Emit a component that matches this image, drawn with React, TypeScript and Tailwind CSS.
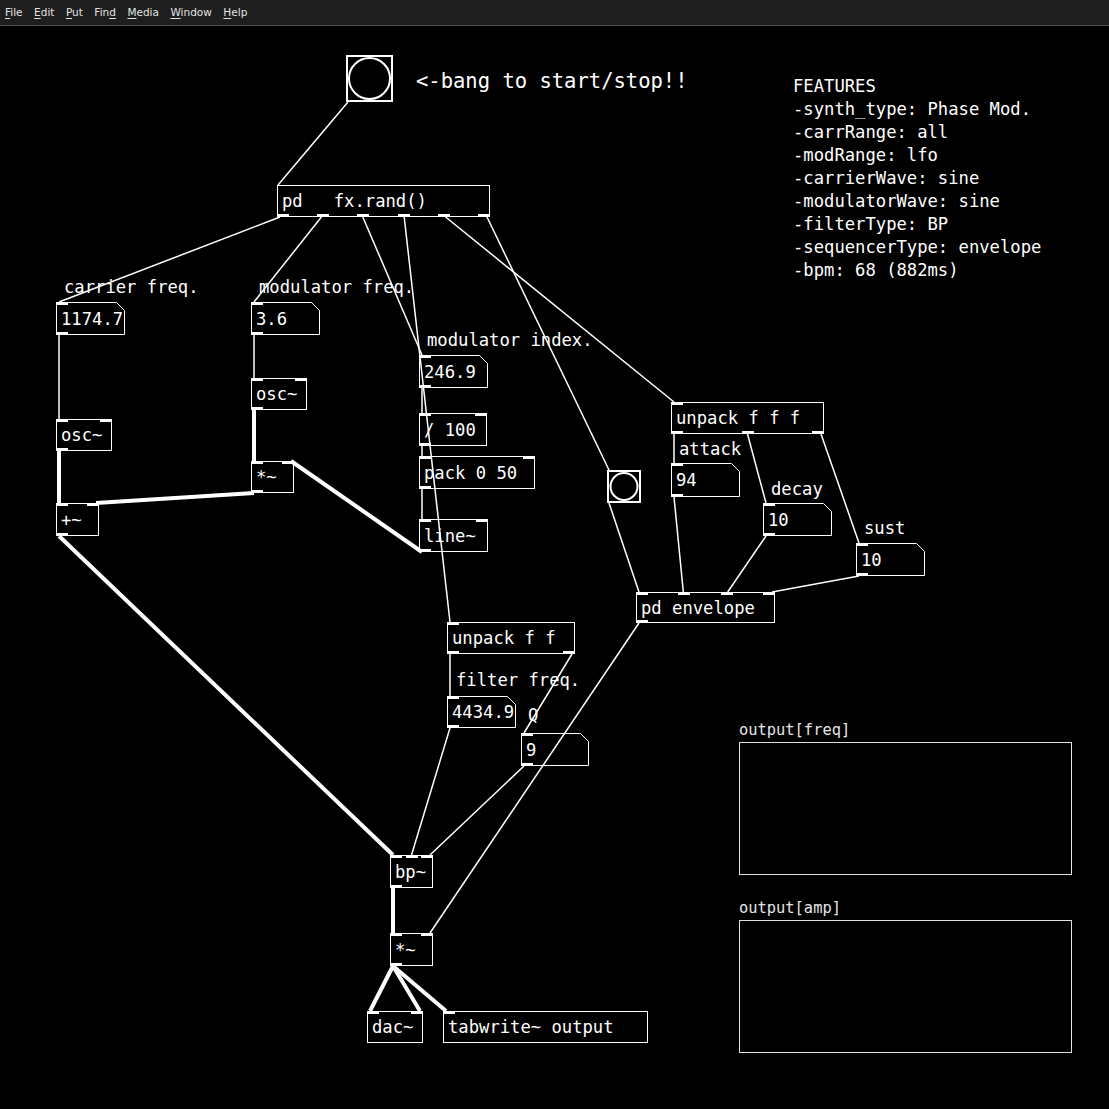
import React from "react";

const Y0 = 26;
const IW = 12;

type Kind = "obj" | "num" | "bang";
type PdNode = {
  id: string;
  kind: Kind;
  x: number;
  y: number;
  w: number;
  h: number;
  text?: string;
  ins: number;
  outs: number;
  hideIn?: boolean;
};

const NODES: PdNode[] = [
  { id: "bang1", kind: "bang", x: 346, y: 55, w: 47, h: 47, ins: 1, outs: 1 },
  { id: "fx", kind: "obj", x: 277, y: 185, w: 213, h: 32, text: "pd   fx.rand()", ins: 1, outs: 6, hideIn: true },
  { id: "car", kind: "num", x: 56, y: 302, w: 69, h: 33, text: "1174.7", ins: 1, outs: 1 },
  { id: "mod", kind: "num", x: 251, y: 302, w: 69, h: 33, text: "3.6", ins: 1, outs: 1 },
  { id: "osc2", kind: "obj", x: 251, y: 378, w: 56, h: 32, text: "osc~", ins: 2, outs: 1 },
  { id: "osc1", kind: "obj", x: 56, y: 419, w: 56, h: 32, text: "osc~", ins: 2, outs: 1 },
  { id: "mul1", kind: "obj", x: 251, y: 461, w: 43, h: 32, text: "*~", ins: 2, outs: 1 },
  { id: "add", kind: "obj", x: 56, y: 503, w: 43, h: 33, text: "+~", ins: 2, outs: 1 },
  { id: "idx", kind: "num", x: 419, y: 355, w: 69, h: 33, text: "246.9", ins: 1, outs: 1 },
  { id: "div", kind: "obj", x: 419, y: 413, w: 68, h: 33, text: "/ 100", ins: 2, outs: 1 },
  { id: "pack", kind: "obj", x: 419, y: 456, w: 116, h: 33, text: "pack 0 50", ins: 2, outs: 1 },
  { id: "line", kind: "obj", x: 419, y: 519, w: 69, h: 33, text: "line~", ins: 2, outs: 1 },
  { id: "bang2", kind: "bang", x: 607, y: 470, w: 34, h: 33, ins: 1, outs: 1 },
  { id: "unp3", kind: "obj", x: 671, y: 402, w: 153, h: 32, text: "unpack f f f", ins: 1, outs: 3 },
  { id: "att", kind: "num", x: 671, y: 463, w: 69, h: 34, text: "94", ins: 1, outs: 1 },
  { id: "dec", kind: "num", x: 763, y: 503, w: 69, h: 33, text: "10", ins: 1, outs: 1 },
  { id: "sus", kind: "num", x: 856, y: 543, w: 69, h: 33, text: "10", ins: 1, outs: 1 },
  { id: "env", kind: "obj", x: 636, y: 592, w: 139, h: 31, text: "pd envelope", ins: 4, outs: 1 },
  { id: "unp2", kind: "obj", x: 447, y: 622, w: 128, h: 32, text: "unpack f f", ins: 1, outs: 2 },
  { id: "ff", kind: "num", x: 447, y: 696, w: 69, h: 32, text: "4434.9", ins: 1, outs: 1 },
  { id: "q", kind: "num", x: 521, y: 733, w: 68, h: 33, text: "9", ins: 1, outs: 1 },
  { id: "bp", kind: "obj", x: 390, y: 855, w: 43, h: 33, text: "bp~", ins: 3, outs: 1 },
  { id: "mul2", kind: "obj", x: 390, y: 933, w: 43, h: 33, text: "*~", ins: 2, outs: 1 },
  { id: "dac", kind: "obj", x: 367, y: 1011, w: 56, h: 32, text: "dac~", ins: 2, outs: 0 },
  { id: "tab", kind: "obj", x: 443, y: 1011, w: 205, h: 32, text: "tabwrite~ output", ins: 1, outs: 0 },
];

// [from, outlet, to, inlet, signal]
const WIRES: [string, number, string, number, boolean?][] = [
  ["bang1", 0, "fx", 0],
  ["fx", 0, "car", 0],
  ["fx", 1, "mod", 0],
  ["fx", 2, "idx", 0],
  ["fx", 3, "unp2", 0],
  ["fx", 4, "unp3", 0],
  ["fx", 5, "bang2", 0],
  ["car", 0, "osc1", 0],
  ["mod", 0, "osc2", 0],
  ["osc2", 0, "mul1", 0, true],
  ["osc1", 0, "add", 0, true],
  ["mul1", 0, "add", 1, true],
  ["line", 0, "mul1", 1, true],
  ["idx", 0, "div", 0],
  ["div", 0, "pack", 0],
  ["pack", 0, "line", 0],
  ["add", 0, "bp", 0, true],
  ["bp", 0, "mul2", 0, true],
  ["mul2", 0, "dac", 0, true],
  ["mul2", 0, "dac", 1, true],
  ["mul2", 0, "tab", 0, true],
  ["unp3", 0, "att", 0],
  ["unp3", 1, "dec", 0],
  ["unp3", 2, "sus", 0],
  ["bang2", 0, "env", 0],
  ["att", 0, "env", 1],
  ["dec", 0, "env", 2],
  ["sus", 0, "env", 3],
  ["unp2", 0, "ff", 0],
  ["unp2", 1, "q", 0],
  ["ff", 0, "bp", 1],
  ["q", 0, "bp", 2],
  ["env", 0, "mul2", 1],
];

// comment labels sitting above their number boxes
const LABELS = [
  { x: 64, top: 277, text: "carrier freq." },
  { x: 259, top: 277, text: "modulator freq." },
  { x: 427, top: 330, text: "modulator index." },
  { x: 679, top: 439, text: "attack" },
  { x: 771, top: 479, text: "decay" },
  { x: 864, top: 518, text: "sust" },
  { x: 456, top: 670, text: "filter freq." },
  { x: 528, top: 705, text: "Q" },
];

const FEATURES = [
  "FEATURES",
  "-synth_type: Phase Mod.",
  "-carrRange: all",
  "-modRange: lfo",
  "-carrierWave: sine",
  "-modulatorWave: sine",
  "-filterType: BP",
  "-sequencerType: envelope",
  "-bpm: 68 (882ms)",
];

const MENU: [string, number][] = [
  ["File", 0],
  ["Edit", 0],
  ["Put", 0],
  ["Find", 3],
  ["Media", 0],
  ["Window", 0],
  ["Help", 0],
];

const byId = Object.fromEntries(NODES.map((n) => [n.id, n]));

const ioLeft = (n: PdNode, i: number, count: number) =>
  count > 1 ? ((n.w - IW) * i) / (count - 1) : 0;

const wireX = (n: PdNode, i: number, count: number) => {
  if (n.kind === "bang") return n.x + 2;
  if (n.hideIn) return n.x + 1;
  return n.x + 3 + (count > 1 ? ((n.w - 6) * i) / (count - 1) : 0);
};

const outX = (n: PdNode, i: number) =>
  n.kind === "bang" ? n.x + 2 : n.x + 3 + (n.outs > 1 ? ((n.w - 6) * i) / (n.outs - 1) : 0);

function MenuBar() {
  return (
    <div className="flex h-[26px] items-center gap-[11.5px] border-b border-[#505050] bg-[#1e1e1e] pl-[5px] font-['DejaVu_Sans',sans-serif] text-[10.5px] text-[#e2e2e2]">
      {MENU.map(([label, u]) => (
        <span key={label}>
          {label.slice(0, u)}
          <span className="underline underline-offset-2">{label[u]}</span>
          {label.slice(u + 1)}
        </span>
      ))}
    </div>
  );
}

function Iolets({ n }: { n: PdNode }) {
  const ins = n.hideIn ? 0 : n.ins;
  return (
    <>
      {Array.from({ length: ins }).map((_, i) => (
        <span
          key={"i" + i}
          className="absolute -top-px h-[3px] w-[12px] bg-white"
          style={{ left: ioLeft(n, i, n.ins) - 1 }}
        />
      ))}
      {Array.from({ length: n.outs }).map((_, i) => (
        <span
          key={"o" + i}
          className="absolute -bottom-px h-[3px] w-[12px] bg-white"
          style={{ left: ioLeft(n, i, n.outs) - 1 }}
        />
      ))}
    </>
  );
}

function Node({ n }: { n: PdNode }) {
  const pos = { left: n.x, top: n.y - Y0, width: n.w, height: n.h };

  if (n.kind === "bang") {
    return (
      <div className="absolute border-2 border-white" style={pos}>
        <svg className="absolute inset-0" width={n.w - 4} height={n.h - 4}>
          <circle cx={(n.w - 4) / 2} cy={(n.h - 4) / 2} r={(n.h - 4) / 2 - 1} fill="none" stroke="white" strokeWidth={2} />
        </svg>
      </div>
    );
  }

  if (n.kind === "num") {
    return (
      <div className="absolute flex items-center pl-[5px] text-[17.2px] leading-[20px]" style={pos}>
        <svg className="absolute inset-0" width={n.w} height={n.h}>
          <polygon
            points={`0.5,0.5 ${n.w - 8.5},0.5 ${n.w - 0.5},8.5 ${n.w - 0.5},${n.h - 0.5} 0.5,${n.h - 0.5}`}
            fill="none"
            stroke="white"
            strokeWidth={1}
          />
          <rect x={0} y={0} width={IW} height={3} fill="white" />
          <rect x={0} y={n.h - 3} width={IW} height={3} fill="white" />
        </svg>
        <span className="relative">{n.text}</span>
      </div>
    );
  }

  return (
    <div
      className="absolute flex items-center whitespace-pre border border-white pl-[4px] text-[17.2px] leading-[20px]"
      style={pos}
    >
      {n.text}
      <Iolets n={n} />
    </div>
  );
}

function Wires() {
  return (
    <svg className="absolute inset-0" width={1109} height={1083}>
      {WIRES.map(([a, o, b, i, sig], k) => {
        const from = byId[a];
        const to = byId[b];
        return (
          <line
            key={k}
            x1={outX(from, o)}
            y1={from.y + from.h - Y0}
            x2={wireX(to, i, to.ins)}
            y2={to.y - Y0}
            stroke="white"
            strokeWidth={sig ? 4 : 1.5}
          />
        );
      })}
    </svg>
  );
}

function Graph({ label }: { label: string }) {
  return (
    <div className="flex flex-col gap-[3px]">
      <span className="text-[15.4px] leading-[18px] text-[#e6e6e6]">{label}</span>
      <div className="h-[133px] w-[333px] border border-[#e0e0e0]" />
    </div>
  );
}

export default function App() {
  return (
    <div className="h-[1109px] w-full overflow-hidden bg-black">
      <MenuBar />
      <div className="relative h-[1083px] w-full overflow-hidden bg-black font-['DejaVu_Sans_Mono','Liberation_Mono',monospace] text-white">
        <Wires />
        {NODES.map((n) => (
          <Node key={n.id} n={n} />
        ))}

        <div className="absolute left-[416px] top-[43px] whitespace-pre text-[20.5px] leading-[24px]">
          {"<-bang to start/stop!!"}
        </div>

        {LABELS.map((l) => (
          <div
            key={l.text}
            className="absolute whitespace-pre text-[17.2px] leading-[20px]"
            style={{ left: l.x, top: l.top - Y0 }}
          >
            {l.text}
          </div>
        ))}

        <div className="absolute left-[793px] top-[48.5px] flex flex-col whitespace-pre text-[17.2px] leading-[23px]">
          {FEATURES.map((f) => (
            <span key={f}>{f}</span>
          ))}
        </div>

        <div className="absolute left-[739px] top-[694.7px] flex flex-col gap-[24px]">
          <Graph label="output[freq]" />
          <Graph label="output[amp]" />
        </div>
      </div>
    </div>
  );
}
